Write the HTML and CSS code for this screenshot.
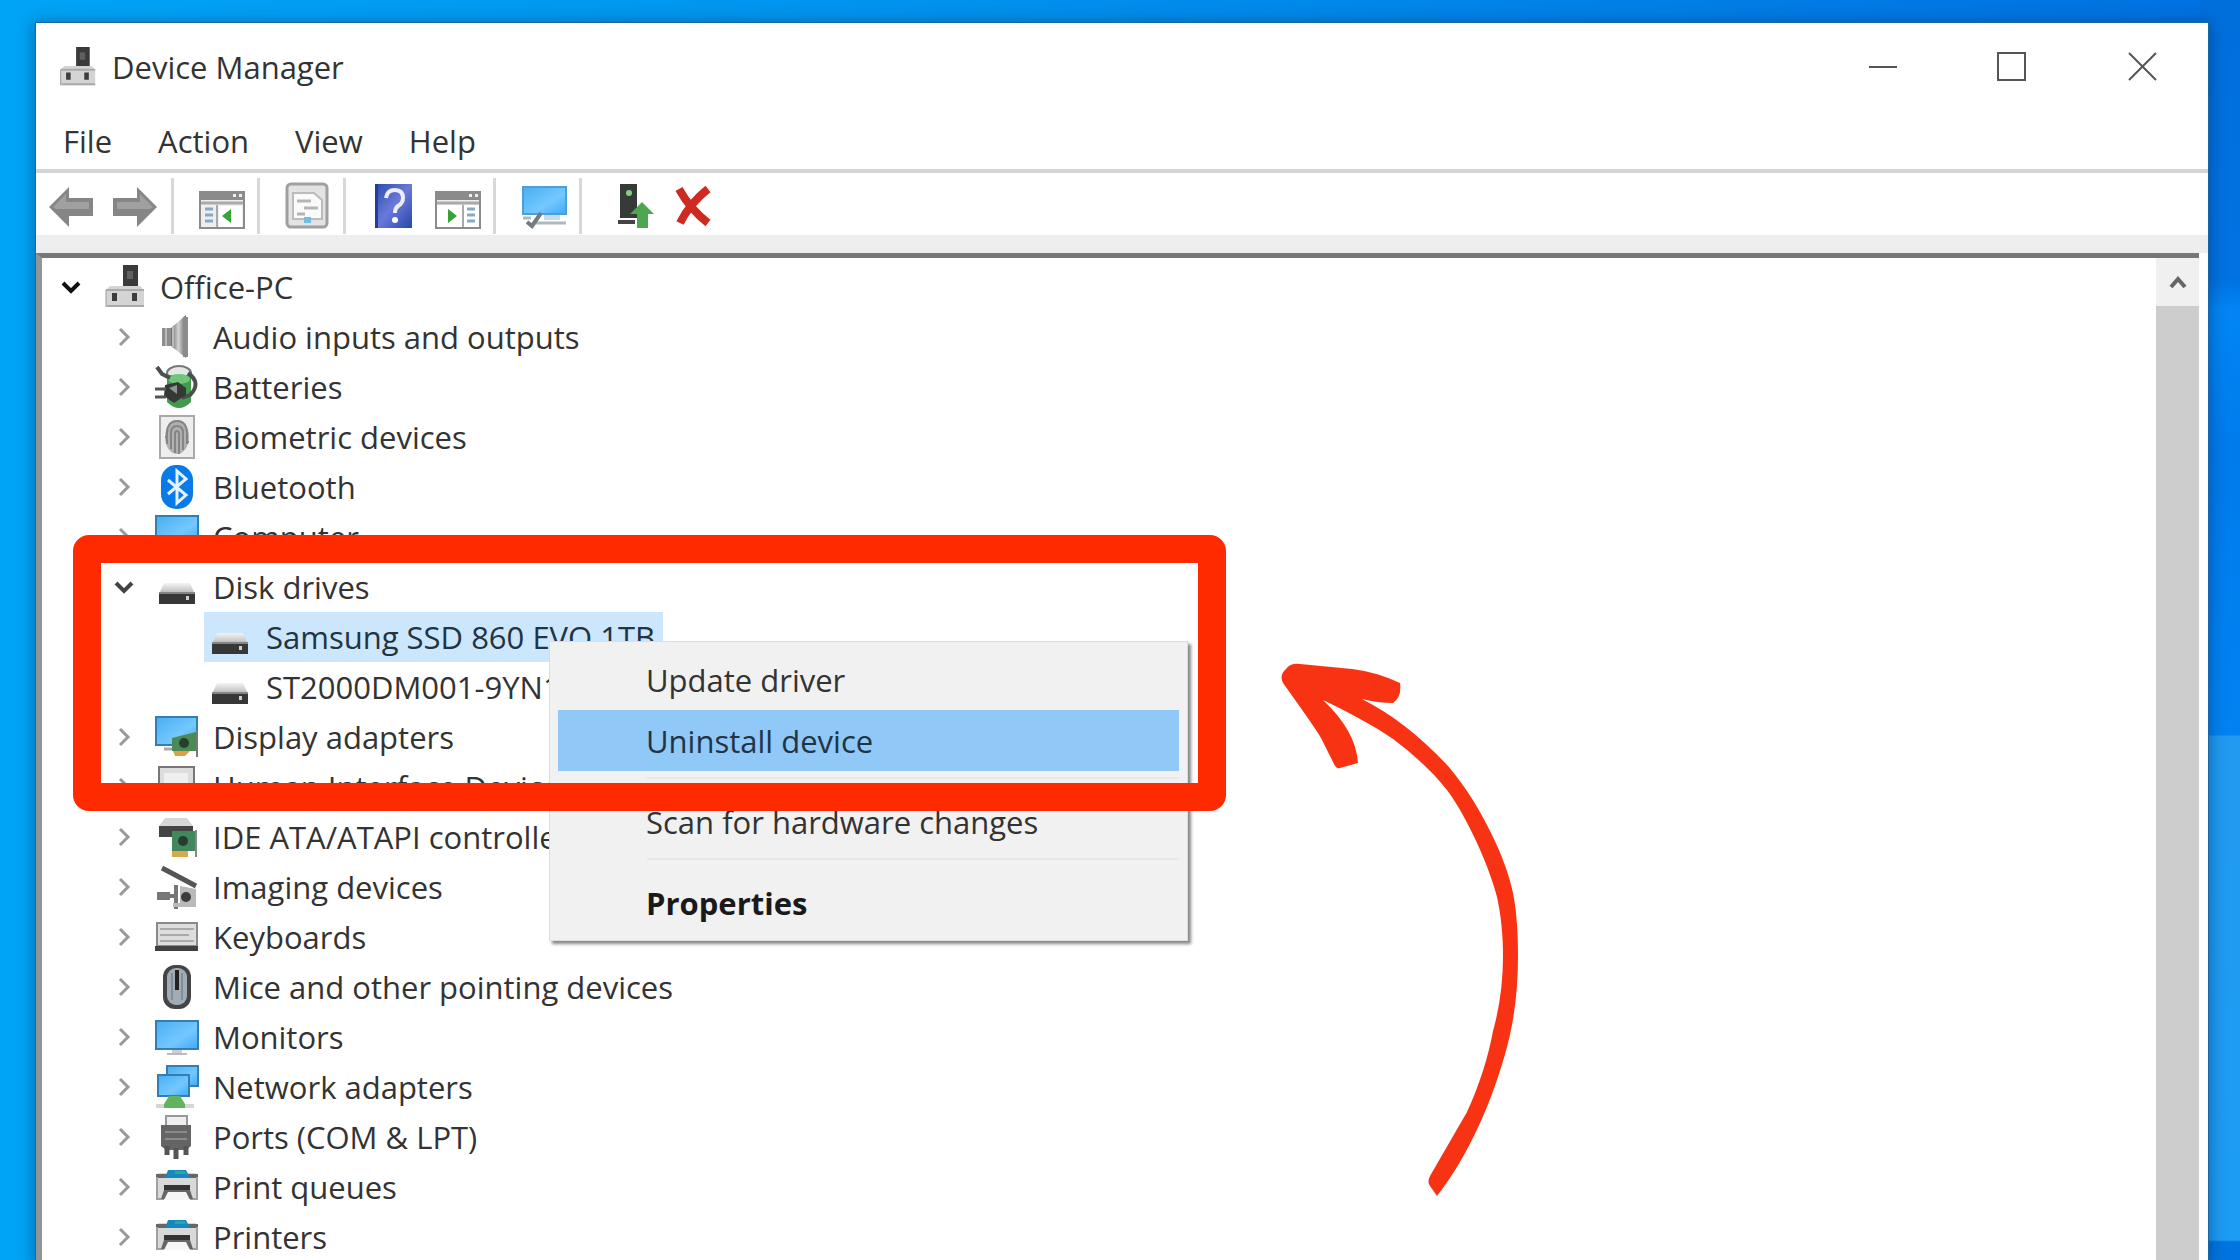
FILE: index.html
```html
<!DOCTYPE html>
<html lang="en">
<head>
<meta charset="utf-8">
<title>Device Manager</title>
<link rel="stylesheet" href="styles.css">
</head>
<body>
<svg class="defs" aria-hidden="true">
  <defs>
    <linearGradient id="screen" x1="0" y1="0" x2="1" y2="1"><stop offset="0" stop-color="#48aef0"/><stop offset=".6" stop-color="#74c8ff"/><stop offset="1" stop-color="#3fa9f5"/></linearGradient>
    <linearGradient id="metal" x1="0" y1="0" x2="1" y2="0"><stop offset="0" stop-color="#6f6f6f"/><stop offset=".5" stop-color="#d2d2d2"/><stop offset="1" stop-color="#666"/></linearGradient>
    <linearGradient id="steel" x1="0" y1="0" x2="0" y2="1"><stop offset="0" stop-color="#f4f4f4"/><stop offset="1" stop-color="#b5b5b5"/></linearGradient>
    <linearGradient id="book" x1="0" y1="0" x2="1" y2="1"><stop offset="0" stop-color="#2a4bab"/><stop offset=".5" stop-color="#6a79da"/><stop offset="1" stop-color="#2747a6"/></linearGradient>
  </defs>
  <symbol id="pc" viewBox="0 0 44 44">
    <path d="M21 0h15v22H21z" fill="#3a3a3a"/><path d="M25 6h6v8h-6z" fill="#606060"/>
    <path d="M8 21h30l4 4v17H4V25z" fill="#d4d4d4"/><path d="M4 25h38M5 41h37" stroke="#aaa" stroke-width="2"/><path d="M4 25v17" stroke="#999" stroke-width="1"/>
    <path d="M10 28h5v8h-5zM30 28h5v8h-5z" fill="#3c3c3c"/>
  </symbol>
  <symbol id="audio" viewBox="0 0 44 44">
    <path d="M7 13h9v18H7z" fill="#8d8d8d"/><path d="M16 13L31 0v43L16 31z" fill="url(#metal)"/><path d="M28 2h5v40h-5z" fill="#8b8b8b"/><path d="M11 13v18M18 12v20" stroke="#bbb" stroke-width="2"/>
  </symbol>
  <symbol id="battery" viewBox="0 0 44 44">
    <ellipse cx="24" cy="8" rx="12" ry="7" fill="#e3e9e5" stroke="#70777a" stroke-width="2"/>
    <path d="M12 10h24v27q-12 12-24 0z" fill="#429b4d"/><ellipse cx="24" cy="14" rx="11" ry="5" fill="#73c579"/>
    <path d="M2 2l5 7 8 4M33 8q14 10 2 22l-8 3" fill="none" stroke="#4b504e" stroke-width="4"/>
    <path d="M10 20l13-3 8 6v7l-12 8-10-7z" fill="#343936"/><path d="M14 23l8-3v9z" fill="#8f9692"/><path d="M0 24h11M0 32h11" stroke="#555" stroke-width="3"/>
  </symbol>
  <symbol id="finger" viewBox="0 0 44 44">
    <path d="M5 1h34v42H5z" fill="#eee" stroke="#aaa" stroke-width="2"/><ellipse cx="22" cy="22" rx="12" ry="17" fill="#b1b1b1"/>
    <g fill="none" stroke="#858585" stroke-width="2"><path d="M12 29V17q1-11 10-11t10 11v12M16 34V18q0-7 6-7t6 7v17M20 38V19q0-3 2-3t2 3v20M10 22h3M31 27h3"/></g>
  </symbol>
  <symbol id="bt" viewBox="0 0 44 44">
    <rect x="6" y="0" width="32" height="44" rx="15" fill="#087be8"/><path d="M13 15l18 15-9 8V6l9 8-18 15" fill="none" stroke="#e4f2ff" stroke-width="3"/>
  </symbol>
  <symbol id="monitor" viewBox="0 0 44 44">
    <path d="M1 6h42v28H1z" fill="url(#screen)" stroke="#337fb5" stroke-width="2"/><path d="M17 35h10v3H17z" fill="#ccd"/><path d="M12 39h20" stroke="#bbb" stroke-width="2"/>
  </symbol>
  <symbol id="computer" viewBox="0 0 44 44">
    <path d="M1 1h42v28H1z" fill="url(#screen)" stroke="#337fb5" stroke-width="2"/><path d="M12 36h20" stroke="#aaa" stroke-width="3"/>
  </symbol>
  <symbol id="disk" viewBox="0 0 44 44">
    <path d="M9 18h26l5 11H4z" fill="url(#steel)"/><path d="M4 28h36v11H4z" fill="#373737"/><path d="M4 28h36" stroke="#858585" stroke-width="2"/><path d="M31 31h3v4h-3z" fill="#cfcfcf"/>
  </symbol>
  <symbol id="display" viewBox="0 0 44 44">
    <path d="M1 2h41v28H1z" fill="url(#screen)" stroke="#337fb5" stroke-width="2"/><path d="M9 34h9" stroke="#aaa" stroke-width="3"/><path d="M17 23l24-6v19H17z" fill="#4b8a55"/><circle cx="29" cy="28" r="5" fill="#263e2c"/><path d="M18 36h17l-5 5H20z" fill="#dfa044"/><path d="M42 15v27" stroke="#777" stroke-width="2"/>
  </symbol>
  <symbol id="hid" viewBox="0 0 44 44"><path d="M4 2h35v34H4z" fill="#ddd" stroke="#777" stroke-width="2"/><path d="M9 8h24v20H9z" fill="#efefef"/></symbol>
  <symbol id="ide" viewBox="0 0 44 44">
    <path d="M10 3h22l6 8H4z" fill="#d6d6d6"/><path d="M4 11h34v11H4z" fill="#444"/><path d="M17 16h23v20H17z" fill="#43885c"/><circle cx="28" cy="26" r="5" fill="#253c32"/><path d="M17 36h16v6H17z" fill="#d6aa4b"/><path d="M41 15v27" stroke="#888" stroke-width="2"/>
  </symbol>
  <symbol id="imaging" viewBox="0 0 44 44">
    <path d="M7 3l34 18" stroke="#555" stroke-width="5"/><path d="M2 27h13v8H2z" fill="#777"/><path d="M15 31h6M21 20v24" stroke="#777" stroke-width="4"/><path d="M25 21l16 3v18H18v-4h7z" fill="#b9b9b9"/><circle cx="31" cy="32" r="5" fill="#3c3c3c"/>
  </symbol>
  <symbol id="keyboard" viewBox="0 0 44 44">
    <path d="M2 8h40v23H2z" fill="#ddd" stroke="#8a8a8a" stroke-width="2"/><path d="M5 14h34M5 20h29M5 26h34" stroke="#aaa" stroke-width="2"/><path d="M0 31h43v5H0z" fill="#404040"/>
  </symbol>
  <symbol id="mouse" viewBox="0 0 44 44">
    <rect x="8" y="0" width="28" height="44" rx="12" fill="#444"/><rect x="12" y="3" width="20" height="37" rx="9" fill="#a0adb6"/><path d="M17 8v27M27 8v27" stroke="#7f8e99" stroke-width="2"/><path d="M22 5v20" stroke="#222" stroke-width="4"/>
  </symbol>
  <symbol id="network" viewBox="0 0 44 44">
    <path d="M12 1h31v20H12z" fill="url(#screen)" stroke="#337fb5" stroke-width="2"/><path d="M3 10h31v21H3z" fill="url(#screen)" stroke="#337fb5" stroke-width="2"/><path d="M1 41h38" stroke="#d5d5d5" stroke-width="4"/><path d="M14 31h11l5 8v4H9v-4z" fill="#61b45d"/>
  </symbol>
  <symbol id="port" viewBox="0 0 44 44">
    <path d="M11 1h21v11H11z" fill="#eee" stroke="#999" stroke-width="2"/><path d="M6 10h30v21l-5 4H11l-5-4z" fill="#656565"/><path d="M10 17h22M10 24h22" stroke="#8b8b8b" stroke-width="2"/><path d="M12 31v9M21 33v11M31 31v9" stroke="#555" stroke-width="5"/>
  </symbol>
  <symbol id="printer" viewBox="0 0 44 44">
    <path d="M3 8h38v26H3z" fill="#d8d8d8"/><path d="M1 9h12v4H1zM32 9h11v4H32z" fill="#666"/><path d="M13 5h18l4 8H10z" fill="#1688bd"/><path d="M20 6h10l1 3H20z" fill="#27a99d"/><path d="M2 12v22h7M42 12v22h-7" fill="none" stroke="#a0a0a0" stroke-width="2"/><path d="M9 20h26v6H9z" fill="#333"/><path d="M9 25h26l3 9H6z" fill="#666"/><path d="M13 27h18l4 8H9z" fill="#f6f6f6"/>
  </symbol>
  <symbol id="console" viewBox="0 0 46 46">
    <path d="M1 5h44v36H1z" fill="#eee" stroke="#8c8c8c" stroke-width="2"/><path d="M0 4h46v9H0z" fill="#8b8b8b"/><path d="M34 7h3v3h-3zM40 7h3v3h-3z" fill="#eee"/><path d="M2 16h42" stroke="#aaa" stroke-width="3"/><path d="M6 22h8M6 28h8M6 34h8" stroke="#88a9c6" stroke-width="3"/><path d="M18 18v22" stroke="#aaa" stroke-width="2"/><path d="M20 19h23v21H20z" fill="#fff"/>
  </symbol>
  <symbol id="chevron" viewBox="0 0 24 24"><path d="M8 4l8 8-8 8" fill="none" stroke="#999" stroke-width="3"/></symbol>
  <symbol id="open" viewBox="0 0 24 24"><path d="M4 8l8 8 8-8" fill="none" stroke="currentColor" stroke-width="4"/></symbol>
</svg>

<main class="window">
  <header class="titlebar">
    <svg class="app-icon"><use href="#pc"/></svg>
    <h1>Device Manager</h1>
    <div class="controls">
      <button type="button" aria-label="Minimize"><svg viewBox="0 0 32 32"><path d="M2 16h28"/></svg></button>
      <button type="button" aria-label="Maximize"><svg viewBox="0 0 32 32"><path d="M1 2h27v27H1z"/></svg></button>
      <button type="button" aria-label="Close"><svg viewBox="0 0 32 32"><path d="M2 2l27 27M29 2L2 29"/></svg></button>
    </div>
  </header>
  <nav class="menubar"><button type="button">File</button><button type="button">Action</button><button type="button">View</button><button type="button">Help</button></nav>
  <div class="toolbar">
    <button type="button" aria-label="Back"><svg viewBox="0 0 46 46"><path d="M1 24L21 4v11h24v18H21v11z" fill="#868686"/><path d="M5 24L18 11v8h23v7H8z" fill="#a0a0a0"/></svg></button>
    <button type="button" aria-label="Forward"><svg viewBox="0 0 46 46"><path d="M45 24L25 4v11H1v18h24v11z" fill="#868686"/><path d="M41 24L28 11v8H5v7h33z" fill="#a0a0a0"/></svg></button>
    <span class="sep"></span>
    <button type="button" aria-label="Console tree"><svg viewBox="0 0 46 46"><g transform="translate(1 4)"><use href="#console" width="46" height="46"/><path d="M32 22v14l-9-7z" fill="#35a435"/></g></svg></button>
    <span class="sep"></span>
    <button type="button" aria-label="Properties"><svg viewBox="0 0 46 46"><rect x="3" y="1" width="40" height="43" rx="4" fill="#e3e3e3" stroke="#a0a0a0" stroke-width="3"/><path d="M9 10h21l8 7v19H9z" fill="#fafafa" stroke="#bbb" stroke-width="2"/><path d="M13 18h14M20 25h14M13 31h8" stroke="#b5b5b5" stroke-width="3"/><path d="M20 34h7v6h-7z" fill="#73bde0"/></svg></button>
    <span class="sep"></span>
    <button type="button" aria-label="Help topics"><svg viewBox="0 0 46 46"><path d="M5 1h37v44H5z" fill="url(#book)"/><path d="M5 1h3v44H5z" fill="#213f99"/><path d="M16 15q1-8 9-8t8 8q0 5-5 8-3 2-3 7" fill="none" stroke="#eef" stroke-width="4"/><circle cx="25" cy="37" r="3" fill="#fff"/></svg></button>
    <button type="button" aria-label="Action pane"><svg viewBox="0 0 46 46"><g transform="translate(1 4)"><use href="#console" width="46" height="46"/><path d="M2 18h42v22H2z" fill="#fff"/><path d="M28 18v22" stroke="#aaa" stroke-width="2"/><path d="M32 22h8M32 28h8M32 34h8" stroke="#88a9c6" stroke-width="3"/><path d="M13 22v14l9-7z" fill="#35a435"/></g></svg></button>
    <span class="sep"></span>
    <button type="button" aria-label="Scan for hardware changes"><svg viewBox="0 0 46 46"><path d="M3 4h43v27H3z" fill="url(#screen)" stroke="#4ba0d7" stroke-width="2"/><path d="M24 32h16v5H24z" fill="#c6dceb"/><path d="M15 40h31M3 35h8" stroke="#aeb8bf" stroke-width="3"/><path d="M21 30l-9 13-5-4" fill="none" stroke="#737b80" stroke-width="4"/></svg></button>
    <span class="sep"></span>
    <button type="button" aria-label="Update driver"><svg viewBox="0 0 46 46"><path d="M14 1h17v34H14z" fill="#363b38"/><path d="M12 39h17" stroke="#444" stroke-width="4"/><circle cx="23" cy="10" r="3" fill="#8c8"/><path d="M36 19l12 12h-6v14H31V31h-7z" fill="#4ca750"/></svg></button>
    <button type="button" aria-label="Uninstall device"><svg viewBox="0 0 46 46"><path d="M9 6q11 20 29 34M38 6Q20 20 10 40" fill="none" stroke="#cf2a22" stroke-width="8"/></svg></button>
  </div>
  <div class="strip"></div>
  <section class="content">
    <ul class="tree">
      <li><div class="row root"><svg class="chev"><use href="#open"/></svg><span class="node"><svg class="icon"><use href="#pc"/></svg>Office-PC</span></div>
        <ul>
          <li><div class="row"><svg class="chev"><use href="#chevron"/></svg><span class="node"><svg class="icon"><use href="#audio"/></svg>Audio inputs and outputs</span></div></li>
          <li><div class="row"><svg class="chev"><use href="#chevron"/></svg><span class="node"><svg class="icon"><use href="#battery"/></svg>Batteries</span></div></li>
          <li><div class="row"><svg class="chev"><use href="#chevron"/></svg><span class="node"><svg class="icon"><use href="#finger"/></svg>Biometric devices</span></div></li>
          <li><div class="row"><svg class="chev"><use href="#chevron"/></svg><span class="node"><svg class="icon"><use href="#bt"/></svg>Bluetooth</span></div></li>
          <li><div class="row"><svg class="chev"><use href="#chevron"/></svg><span class="node"><svg class="icon"><use href="#computer"/></svg>Computer</span></div></li>
          <li><div class="row"><svg class="chev"><use href="#open"/></svg><span class="node"><svg class="icon"><use href="#disk"/></svg>Disk drives</span></div>
            <ul>
              <li><div class="row leaf"><span class="node selected"><svg class="icon"><use href="#disk"/></svg>Samsung SSD 860 EVO 1TB</span></div></li>
              <li><div class="row leaf"><span class="node"><svg class="icon"><use href="#disk"/></svg>ST2000DM001-9YN164</span></div></li>
            </ul>
          </li>
          <li><div class="row"><svg class="chev"><use href="#chevron"/></svg><span class="node"><svg class="icon"><use href="#display"/></svg>Display adapters</span></div></li>
          <li><div class="row"><svg class="chev"><use href="#chevron"/></svg><span class="node"><svg class="icon"><use href="#hid"/></svg>Human Interface Devices</span></div></li>
          <li><div class="row"><svg class="chev"><use href="#chevron"/></svg><span class="node"><svg class="icon"><use href="#ide"/></svg>IDE ATA/ATAPI controllers</span></div></li>
          <li><div class="row"><svg class="chev"><use href="#chevron"/></svg><span class="node"><svg class="icon"><use href="#imaging"/></svg>Imaging devices</span></div></li>
          <li><div class="row"><svg class="chev"><use href="#chevron"/></svg><span class="node"><svg class="icon"><use href="#keyboard"/></svg>Keyboards</span></div></li>
          <li><div class="row"><svg class="chev"><use href="#chevron"/></svg><span class="node"><svg class="icon"><use href="#mouse"/></svg>Mice and other pointing devices</span></div></li>
          <li><div class="row"><svg class="chev"><use href="#chevron"/></svg><span class="node"><svg class="icon"><use href="#monitor"/></svg>Monitors</span></div></li>
          <li><div class="row"><svg class="chev"><use href="#chevron"/></svg><span class="node"><svg class="icon"><use href="#network"/></svg>Network adapters</span></div></li>
          <li><div class="row"><svg class="chev"><use href="#chevron"/></svg><span class="node"><svg class="icon"><use href="#port"/></svg>Ports (COM &amp; LPT)</span></div></li>
          <li><div class="row"><svg class="chev"><use href="#chevron"/></svg><span class="node"><svg class="icon"><use href="#printer"/></svg>Print queues</span></div></li>
          <li><div class="row"><svg class="chev"><use href="#chevron"/></svg><span class="node"><svg class="icon"><use href="#printer"/></svg>Printers</span></div></li>
        </ul>
      </li>
    </ul>
    <div class="scrollbar"><button type="button" aria-label="Scroll up"><svg viewBox="0 0 24 24"><path d="M5 17l7-8 7 8" fill="none" stroke="#666" stroke-width="4"/></svg></button><div class="thumb"></div></div>
  </section>
  <div class="context-menu">
    <button type="button">Update driver</button>
    <button type="button" class="hot">Uninstall device</button>
    <hr>
    <button type="button">Scan for hardware changes</button>
    <hr>
    <button type="button" class="strong">Properties</button>
  </div>
</main>
<div class="callout"></div>
<svg class="arrow" viewBox="0 0 320 620" aria-hidden="true"><path d="M43 63Q39 55 46 49Q50 43 60 44L112 49Q137 52 160 63Q162 77 153 83Q138 83 122 79C152 94 182 118 208 146C226 167 240 190 252 215C261 233 269 254 273 273C277 293 278 315 278 336C278 367 275 397 267 427C253 480 228 537 197 576L190 566Q187 562 190 556L227 492C239 466 248 438 253 411C260 386 263 361 263 336C263 316 261 295 257 277C250 249 229 200 207 170C192 151 173 134 153 119C133 105 106 91 83 80Q116 111 118 143L100 148Q96 149 94 144L81 118Q76 109 43 63Z" fill="#f73314"/></svg>
</body>
</html>
```
FILE: styles.css
```css
* { box-sizing: border-box; }

body {
  margin: 0;
  height: 100vh;
  overflow: hidden;
  position: relative;
  display: flex;
  padding: 23px 32px 0 36px;
  font: 31px/40px "Open Sans", sans-serif;
  color: #333;
  background:
    linear-gradient(#006fdc, #0072e2 280px, #0086f4 310px, #007bec 450px, #0083f2 735px, #219bf0 736px, #1d9cf4 1240px, #0074e0 1242px) right / 40px 100% no-repeat,
    linear-gradient(90deg, #00a4f6, #0093ee 40%, #0070e0);
}

.defs { position: absolute; width: 0; height: 0; }

button {
  border: 0;
  padding: 0;
  background: none;
  font: inherit;
  color: inherit;
}

ul { list-style: none; margin: 0; padding: 0; }

.window {
  flex: 1;
  min-width: 0;
  display: flex;
  flex-direction: column;
  background: #fff;
  box-shadow: 0 0 0 1px #1766a8, 0 2px 14px 3px rgba(0, 40, 90, .4);
}

.titlebar {
  flex: none;
  height: 88px;
  display: flex;
  align-items: center;
  padding-left: 21px;
}

.titlebar h1 { margin: 0 0 0 15px; font-size: 31px; font-weight: 400; }
.app-icon { width: 40px; height: 44px; }
.controls { display: flex; margin-left: auto; height: 84px; }
.controls button { width: 130px; display: grid; place-items: center; }
.controls svg { width: 32px; height: 32px; fill: none; stroke: #555; stroke-width: 2; }

.menubar {
  flex: none;
  height: 62px;
  padding: 2px 0 0 4px;
  border-bottom: 4px solid #d5d5d5;
  display: flex;
}
.menubar button { padding: 0 23px; }

.toolbar { flex: none; height: 62px; padding: 3px 0 0 3px; display: flex; align-items: center; }
.toolbar button { width: 64px; display: grid; place-items: center; }
.toolbar svg { width: 46px; height: 46px; overflow: visible; }
.sep { width: 3px; height: 56px; margin: 0 15px 0 4px; background: #d8d8d8; }

.strip { flex: none; height: 18px; background: #eee; }

.content {
  flex: 1;
  min-height: 0;
  display: flex;
  overflow: hidden;
  margin-right: 9px;
  border-top: 5px solid #777;
  border-left: 6px solid #8f9796;
}

.tree { flex: 1; padding: 4px 0 0 17px; }
.tree ul { padding-left: 53px; }
.row { height: 50px; display: flex; align-items: center; white-space: nowrap; }
.chev { flex: none; width: 24px; height: 24px; margin-right: 15px; color: #444; }
.root .chev { color: #111; }
.leaf { padding-left: 39px; }
.node { height: 50px; padding: 0 8px 0 4px; display: flex; align-items: center; gap: 14px; }
.icon { flex: none; width: 44px; height: 44px; }
.selected { background: #cce6fc; color: #234; }

.scrollbar { width: 43px; display: flex; flex-direction: column; background: #f0f0f0; }
.scrollbar button { height: 48px; display: grid; place-items: center; }
.scrollbar svg { width: 24px; height: 24px; }
.thumb { flex: 1; background: #cdcdcd; }

.context-menu {
  position: absolute;
  left: 549px;
  top: 641px;
  width: 639px;
  padding: 7px 8px;
  display: flex;
  flex-direction: column;
  background: #f1f1f1;
  border: 1px solid #ddd;
  box-shadow: 3px 3px 3px #888;
}
.context-menu button { height: 61px; padding-left: 88px; text-align: left; }
.context-menu hr { width: 532px; height: 2px; margin: 6px 0 12px auto; border: 0; background: #e6e8e8; }
.context-menu .hot { background: #90c8f8; color: #234; }
.context-menu .strong { font-weight: 700; color: #1a1a1a; }

.callout {
  position: absolute;
  left: 73px;
  top: 535px;
  width: 1153px;
  height: 276px;
  border: 28px solid #ff2a00;
  border-radius: 16px;
  pointer-events: none;
}

.arrow { position: absolute; left: 1240px; top: 620px; width: 320px; height: 620px; }
```
